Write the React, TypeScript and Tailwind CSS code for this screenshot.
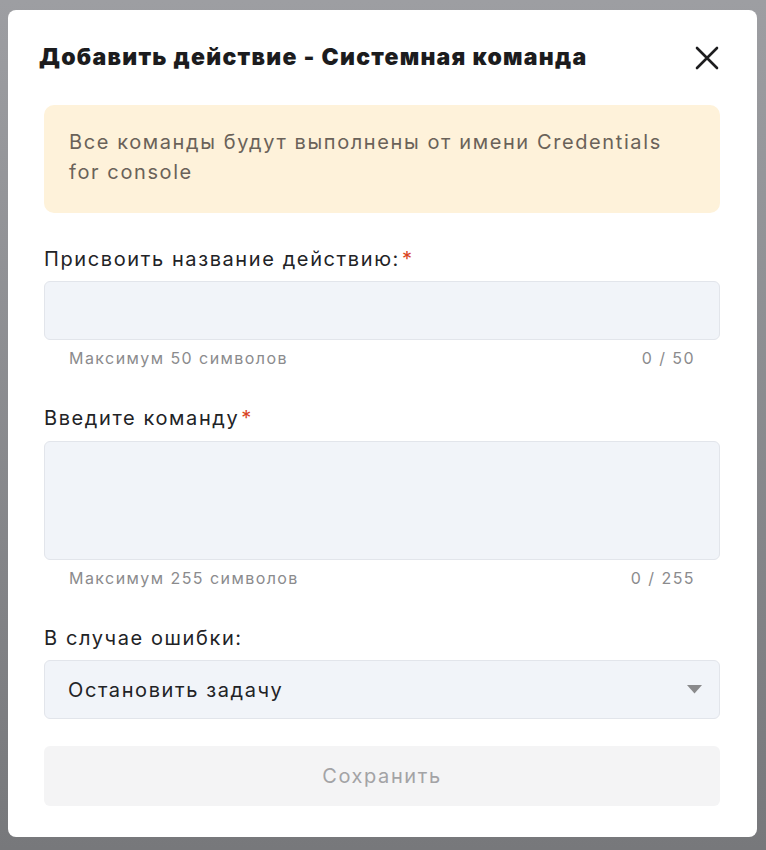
import React from "react";

const font = { fontFamily: "Inter, 'Noto Sans', sans-serif" };

function CloseIcon() {
  return (
    <svg width="24" height="24" viewBox="0 0 24 24" className="text-[#1d1d1f]">
      <path d="M2 2 L22 22 M22 2 L2 22" stroke="currentColor" strokeWidth="2.6" strokeLinecap="round" />
    </svg>
  );
}

function Label({ text, required }: { text: string; required?: boolean }) {
  return (
    <div className="text-[20px] leading-[26px] tracking-[0.08em] text-[#222326]">
      {text}
      {required && <span className="ml-[2px] text-[#d9431e]">*</span>}
    </div>
  );
}

function Hint({ left, right }: { left: string; right: string }) {
  return (
    <div className="mt-[8px] flex justify-between px-[25px] text-[16px] leading-[20px] tracking-[0.09em] text-[#8b8b8d]">
      <span>{left}</span>
      <span>{right}</span>
    </div>
  );
}

export default function App() {
  return (
    <div
      style={font}
      className="flex h-[850px] w-full items-start bg-gradient-to-b from-[#9d9ea2] to-[#77787b] pl-[8px] pt-[10px]"
    >
      <div className="flex h-[827px] w-[749px] flex-col rounded-[8px] bg-white pb-[30px] pl-[36px] pr-[37px] pt-[33px]">
        {/* Header */}
        <div className="flex items-center justify-between">
          <h2 className="-ml-[5px] text-[23px] font-black leading-[28px] tracking-[0.055em] text-[#1c1c1e]">
            Добавить действие - Системная команда
          </h2>
          <button className="mr-[1px] mt-[2px]">
            <CloseIcon />
          </button>
        </div>

        {/* Notice */}
        <div className="mt-[34px] rounded-[10px] bg-[#fef2da] px-[25px] pb-[26px] pt-[22px] text-[20px] leading-[30px] tracking-[0.08em] text-[#6a6259]">
          Все команды будут выполнены от имени Credentials for console
        </div>

        {/* Name */}
        <div className="mt-[33px]">
          <Label text="Присвоить название действию:" required />
          <div className="mt-[9px] h-[59px] rounded-[6px] border border-[#e2e5eb] bg-[#f1f4f9]" />
          <Hint left="Максимум 50 символов" right="0 / 50" />
        </div>

        {/* Command */}
        <div className="mt-[37px]">
          <Label text="Введите команду" required />
          <div className="mt-[10px] h-[119px] rounded-[6px] border border-[#e2e5eb] bg-[#f1f4f9]" />
          <Hint left="Максимум 255 символов" right="0 / 255" />
        </div>

        {/* On error */}
        <div className="mt-[37px]">
          <Label text="В случае ошибки:" />
          <div className="mt-[9px] flex h-[59px] items-center justify-between rounded-[6px] border border-[#e2e5eb] bg-[#f1f4f9] pl-[23px] pr-[17px]">
            <span className="text-[20px] tracking-[0.08em] text-[#222326]">Остановить задачу</span>
            <svg width="15" height="9" viewBox="0 0 15 9">
              <path d="M0 0 H15 L7.5 8.5 Z" fill="#8a8a8c" />
            </svg>
          </div>
        </div>

        <button className="mt-[27px] h-[60px] w-full rounded-[6px] bg-[#f4f4f5] text-[20px] tracking-[0.08em] text-[#a3a3a5]">
          Сохранить
        </button>
      </div>
    </div>
  );
}
